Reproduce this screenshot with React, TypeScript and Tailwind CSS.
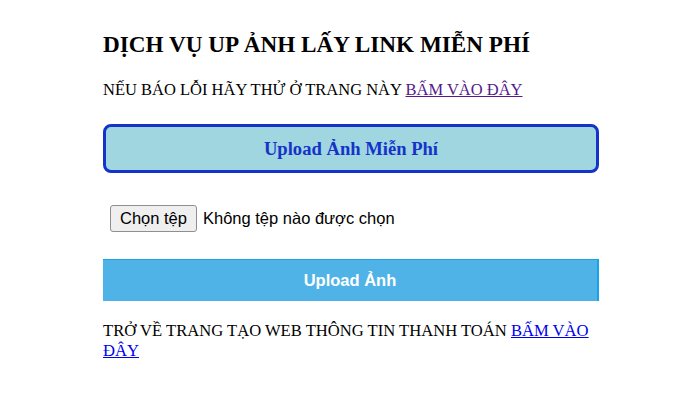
export default function App() {
  return (
    <div className="min-h-[406px] w-full bg-white font-['Liberation_Serif',serif] text-black">
      <div className="ml-[103px] w-[496px] pt-[30px]">
        <h2 className="text-[23.2px] font-bold leading-[28px]">DỊCH VỤ UP ẢNH LẤY LINK MIỄN PHÍ</h2>
        <p className="mt-[22px] text-[16.5px] leading-[20px]">
          NẾU BÁO LỖI HÃY THỬ Ở TRANG NÀY{' '}
          <a href="#" className="text-[#551a8b] underline">
            BẤM VÀO ĐÂY
          </a>
        </p>

        <button className="mt-[24px] flex h-[49px] w-full items-center justify-center rounded-[8px] border-[3px] border-[#1533c9] bg-[#9fd6e0] text-[18.6px] font-bold text-[#1533c9]">
          Upload Ảnh Miễn Phí
        </button>

        <div className="mt-[32px] flex items-center pl-[7px] font-['Liberation_Sans',Arial,sans-serif] text-[16.5px]">
          <span className="flex h-[27px] items-center rounded-[3px] border border-[#8f8f8f] bg-[#efefef] px-[9px]">
            Chọn tệp
          </span>
          <span className="ml-[6px]">Không tệp nào được chọn</span>
        </div>

        <button className="mt-[27px] flex h-[42px] w-full items-center justify-center border-t border-r-2 border-[#1aa3e8] bg-[#4fb3e8] font-['Liberation_Sans',Arial,sans-serif] text-[16.5px] font-bold text-white">
          Upload Ảnh
        </button>

        <p className="mt-[20px] text-[16.6px] leading-[20px]">
          TRỞ VỀ TRANG TẠO WEB THÔNG TIN THANH TOÁN{' '}
          <a href="#" className="text-[#0000ee] underline">
            BẤM VÀO ĐÂY
          </a>
        </p>
      </div>
    </div>
  )
}
